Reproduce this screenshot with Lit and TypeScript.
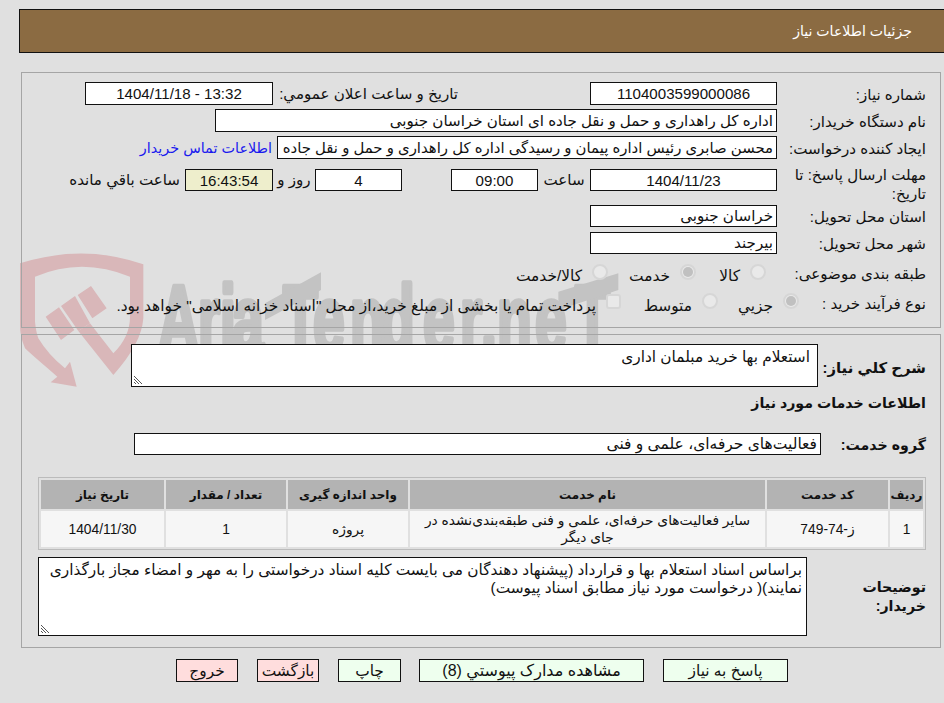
import { LitElement, html, css } from "lit";
import { customElement } from "lit/decorators.js";

@customElement("app-root")
export class AppRoot extends LitElement {
  static styles = css`
    :host { display: block; width: 944px; height: 703px; background: #e0e0e0; overflow: hidden; position: relative;
      font-family: "Liberation Sans", "DejaVu Sans", sans-serif; font-size: 15.1px; color: #111; }
    .page { position: relative; direction: rtl; display: flex; flex-direction: column; padding: 9px 3px 0 0; }
    .head { width: 925px; height: 44px; margin-right: -3px; background: #8b6b42; border: 1px solid #111; border-right: 0; color: #fff;
      display: flex; align-items: center; padding-right: 32px; box-sizing: border-box; font-size: 14.1px; }
    .panel { border: 1px solid #a5a5a5; box-sizing: border-box; width: 920px; }
    .p1 { margin-top: 19px; height: 256px; padding: 9px 14px 0 0; }
    .p2 { margin-top: 6px; height: 314px; padding: 9px 14px 0 14px; }
    .row { display: grid; grid-template-columns: 149px 1fr; align-items: center; }
    .lbl { line-height: 19px; padding-top: 2px; }
    .val { display: flex; align-items: center; }
    .box { background: #fff; border: 1px solid #111; box-sizing: border-box; height: 23px; display: flex; align-items: center; justify-content: center; white-space: nowrap; overflow: hidden; flex: none; }
    .box.s { justify-content: flex-start; padding: 0 3px; }
    .ltr { direction: ltr; }
    .low { height: 22px; }
    .w187 { width: 187px; }
    .w87 { width: 87px; }
    .w88 { width: 88px; }
    .w188 { width: 188px; margin-right: 5px; }
    .w500 { width: 500px; font-size: 14.9px; }
    .w562 { width: 562px; }
    .timer { background: #eeeecc; }
    .link { color: #1a1aee; margin-right: 5px; white-space: nowrap; font-size: 14.4px; }
    .mt4 { margin-top: 4px; }
    .mt5 { margin-top: 5px; }
    .txt { white-space: nowrap; flex: none; }
    .ctr { text-align: center; }
    .pub { width: 180px; margin-right: 132px; }
    .w52 { width: 52px; }
    .w42 { width: 42px; }
    .sp49 { width: 49px; }
    .rem { margin-right: 5px; }
    .deadline { margin-top: 5px; align-items: start; }
    .deadline .val { margin-top: 5px; }
    .deadline .lbl { padding-top: 1px; }
    .r5 { margin-top: 2px; }
    .loc .lbl { padding-top: 0; }
    .r7 { margin-top: 11px; }
    .r8 { margin-top: 8px; }
    .pick > .lbl { padding: 0; margin-top: -6px; }
    .opts { height: 22px; font-size: 15.4px; }
    .opts.shift { margin-right: -22px; }
    .opt { display: flex; align-items: center; white-space: nowrap; gap: 10px; flex: none; }
    .o1 { margin-right: 11px; width: 70px; }
    .o2 { width: 88px; }
    .o3 { width: 81px; }
    .o4 { width: 97px; }
    .radio { width: 16px; height: 16px; border-radius: 50%; border: 2px solid #d6d6d6; background: #e9e9e9; box-sizing: border-box; display: flex; align-items: center; justify-content: center; flex: none; transform: translateY(-4px); }
    .radio.on::after { content: ""; width: 10px; height: 10px; border-radius: 50%; background: #c0c0c0; }
    .check { width: 15px; height: 15px; border-radius: 3px; border: 2px solid #d6d6d6; background: #e9e9e9; box-sizing: border-box; flex: none; transform: translateY(-5px); }
    .shift .radio { transform: translateY(-5px); }
    .b { font-weight: bold; font-size: 14.2px; }
    .area { position: relative; background: #fff; border: 1px solid #111; box-sizing: border-box; flex: none; font-size: 15.35px; }
    .area .t { line-height: 18px; }
    .grip { position: absolute; left: 1px; bottom: 1px; width: 10px; height: 10px; }
    .need { width: 687px; height: 43px; margin-right: -41px; }
    .need .t { padding: 3px 7px 0 0; }
    .need-lbl { padding-top: 5px; font-size: 14.9px; white-space: nowrap; }
    .svc-title { margin-top: 8px; }
    .svc-group { margin-top: 21px; }
    .group-lbl { padding-top: 4px; }
    .group { width: 687px; margin-right: -44px; font-size: 15.5px; }
    table { border: 1px solid #bbb; border-spacing: 2px; border-collapse: separate; table-layout: fixed; width: 888px; margin-top: 22px; }
    th { background: #b3b3b3; height: 29px; padding: 0; font-size: 12px; }
    td { background: #f6f6f6; height: 36px; padding: 0 3px; text-align: center; line-height: 17px; font-size: 13.8px; }
    .c33 { width: 33px; }
    .c120 { width: 120px; }
    .c121 { width: 121px; }
    .c355 { width: 355px; }
    .buyer { margin-top: 7px; grid-template-columns: 119px 1fr; }
    .buyer .lbl { padding: 0 0 0 40px; }
    .desc { width: 769px; height: 79px; }
    .desc .t { padding: 3px 4px 0 8px; }
    .foot { display: flex; margin-top: 11px; padding-right: 153px; font-size: 15.4px; }
    .btn { height: 23px; box-sizing: border-box; border: 1px solid #111; display: flex; align-items: center; justify-content: center; background: #eeffee; white-space: nowrap; flex: none; }
    .b125 { width: 125px; }
    .b225 { width: 225px; margin-right: 19px; font-size: 16px; }
    .b63 { width: 63px; margin-right: 18px; }
    .b62 { width: 62px; margin-right: 19px; }
    .red { background: #ffdddd; }
    .wm { position: absolute; left: 0; top: 240px; width: 644px; height: 160px; }
    .wm-text { font-family: "Liberation Sans", sans-serif; font-weight: 700; font-size: 285px; fill: #c3c3c3; stroke: #c3c3c3; stroke-width: 16px; stroke-linejoin: round; }
    .sh { fill: #d9b7b9; }
    .bar { fill: #c3c3c3; }
  `;

  private grip() {
    return html`<svg class="grip" viewBox="0 0 10 10"><path d="M1 1 9 9M1 4 6 9M1 7 3 9" stroke="#555" fill="none"/></svg>`;
  }

  private watermark() {
    return html`<svg class="wm" viewBox="0 0 1932 480" aria-hidden="true">
      <path class="sh" d="M60 70Q250 10 430 73V235Q425 310 340 405L235 273 270 250 340 340Q390 290 390 230V110Q245 50 105 110V245Q108 275 115 295Q145 345 195 385L210 365 230 440 152 427 172 410Q90 340 75 325Q60 290 60 255Z"/>
      <path class="sh" d="M137 230 177 202 223 270 183 300ZM183 198 225 168 270 250 235 273ZM233 165 273 138 320 205 277 235Z"/>
      <text class="wm-text" transform="scale(0.6 1)" y="335" x="790 990 1100 1160 1415 1565 1750 1900 2115 2300 2405 2485 2675 2875">AriaTender.neT</text>
      <path class="bar" d="M795 190 963 97V150L795 240ZM1675 155 1855 100V150L1675 210Z"/>
    </svg>`;
  }

  render() {
    return html`
      ${this.watermark()}
      <div class="page">
        <div class="head">جزئیات اطلاعات نیاز</div>
        <div class="panel p1">
          <div class="row">
            <div class="lbl">شماره نیاز:</div>
            <div class="val">
              <div class="box w187">1104003599000086</div>
              <div class="txt pub">تاریخ و ساعت اعلان عمومي:</div>
              <div class="box w188 ltr">1404/11/18 - 13:32</div>
            </div>
          </div>
          <div class="row mt4">
            <div class="lbl">نام دستگاه خریدار:</div>
            <div class="val"><div class="box s w562">اداره کل راهداری و حمل و نقل جاده ای استان خراسان جنوبی</div></div>
          </div>
          <div class="row mt4">
            <div class="lbl">ایجاد کننده درخواست:</div>
            <div class="val"><div class="box s w500">محسن صابری رئیس اداره پیمان و رسیدگی اداره کل راهداری و حمل و نقل جاده</div><a class="link">اطلاعات تماس خریدار</a></div>
          </div>
          <div class="row deadline">
            <div class="lbl">مهلت ارسال پاسخ: تا تاریخ:</div>
            <div class="val">
              <div class="box w187 low">1404/11/23</div>
              <div class="txt ctr w52">ساعت</div>
              <div class="box w87 low">09:00</div>
              <div class="sp49"></div>
              <div class="box w87 low">4</div>
              <div class="txt ctr w42">روز و</div>
              <div class="box w88 low timer">16:43:54</div>
              <div class="txt rem">ساعت باقي مانده</div>
            </div>
          </div>
          <div class="row r5 loc">
            <div class="lbl">استان محل تحویل:</div>
            <div class="val"><div class="box s w187 low">خراسان جنوبی</div></div>
          </div>
          <div class="row mt5 loc">
            <div class="lbl">شهر محل تحویل:</div>
            <div class="val"><div class="box s w187 low">بیرجند</div></div>
          </div>
          <div class="row r7 pick">
            <div class="lbl">طبقه بندی موضوعی:</div>
            <div class="val opts">
              <div class="opt o1"><span class="radio"></span><span>کالا</span></div>
              <div class="opt o2"><span class="radio on"></span><span>خدمت</span></div>
              <div class="opt"><span class="radio"></span><span>کالا/خدمت</span></div>
            </div>
          </div>
          <div class="row r8 pick">
            <div class="lbl">نوع فرآیند خرید :</div>
            <div class="val opts shift">
              <div class="opt o3"><span class="radio on"></span><span>جزيي</span></div>
              <div class="opt o4"><span class="radio"></span><span>متوسط</span></div>
              <div class="opt"><span class="check"></span><span>پرداخت تمام یا بخشی از مبلغ خرید،از محل "اسناد خزانه اسلامی" خواهد بود.</span></div>
            </div>
          </div>
        </div>
        <div class="panel p2">
          <div class="row">
            <div class="lbl b need-lbl">شرح کلي نیاز:</div>
            <div class="val"><div class="area need"><div class="t">استعلام بها خرید مبلمان اداری</div>${this.grip()}</div></div>
          </div>
          <div class="b svc-title">اطلاعات خدمات مورد نیاز</div>
          <div class="row svc-group">
            <div class="lbl b group-lbl">گروه خدمت:</div>
            <div class="val"><div class="box s low group">فعالیت‌های حرفه‌ای، علمی و فنی</div></div>
          </div>
          <table>
            <colgroup><col class="c33"><col class="c121"><col class="c355"><col class="c120"><col class="c120"><col></colgroup>
            <tr><th>ردیف</th><th>کد خدمت</th><th>نام خدمت</th><th>واحد اندازه گیری</th><th>تعداد / مقدار</th><th>تاریخ نیاز</th></tr>
            <tr><td>1</td><td>ز-74-749</td><td>سایر فعالیت‌های حرفه‌ای، علمی و فنی طبقه‌بندی‌نشده در جای دیگر</td><td>پروژه</td><td>1</td><td>1404/11/30</td></tr>
          </table>
          <div class="row buyer">
            <div class="lbl b">توضیحات خریدار:</div>
            <div class="val"><div class="area desc"><div class="t">براساس اسناد استعلام بها و قرارداد (پیشنهاد دهندگان می بایست کلیه اسناد درخواستی را به مهر و امضاء مجاز بارگذاری نمایند)( درخواست مورد نیاز مطابق اسناد پیوست)</div>${this.grip()}</div></div>
          </div>
        </div>
        <div class="foot">
          <div class="btn b125">پاسخ به نیاز</div>
          <div class="btn b225">مشاهده مدارک پیوستي (8)</div>
          <div class="btn b63">چاپ</div>
          <div class="btn red b62">بازگشت</div>
          <div class="btn red b62">خروج</div>
        </div>
      </div>
    `;
  }
}
